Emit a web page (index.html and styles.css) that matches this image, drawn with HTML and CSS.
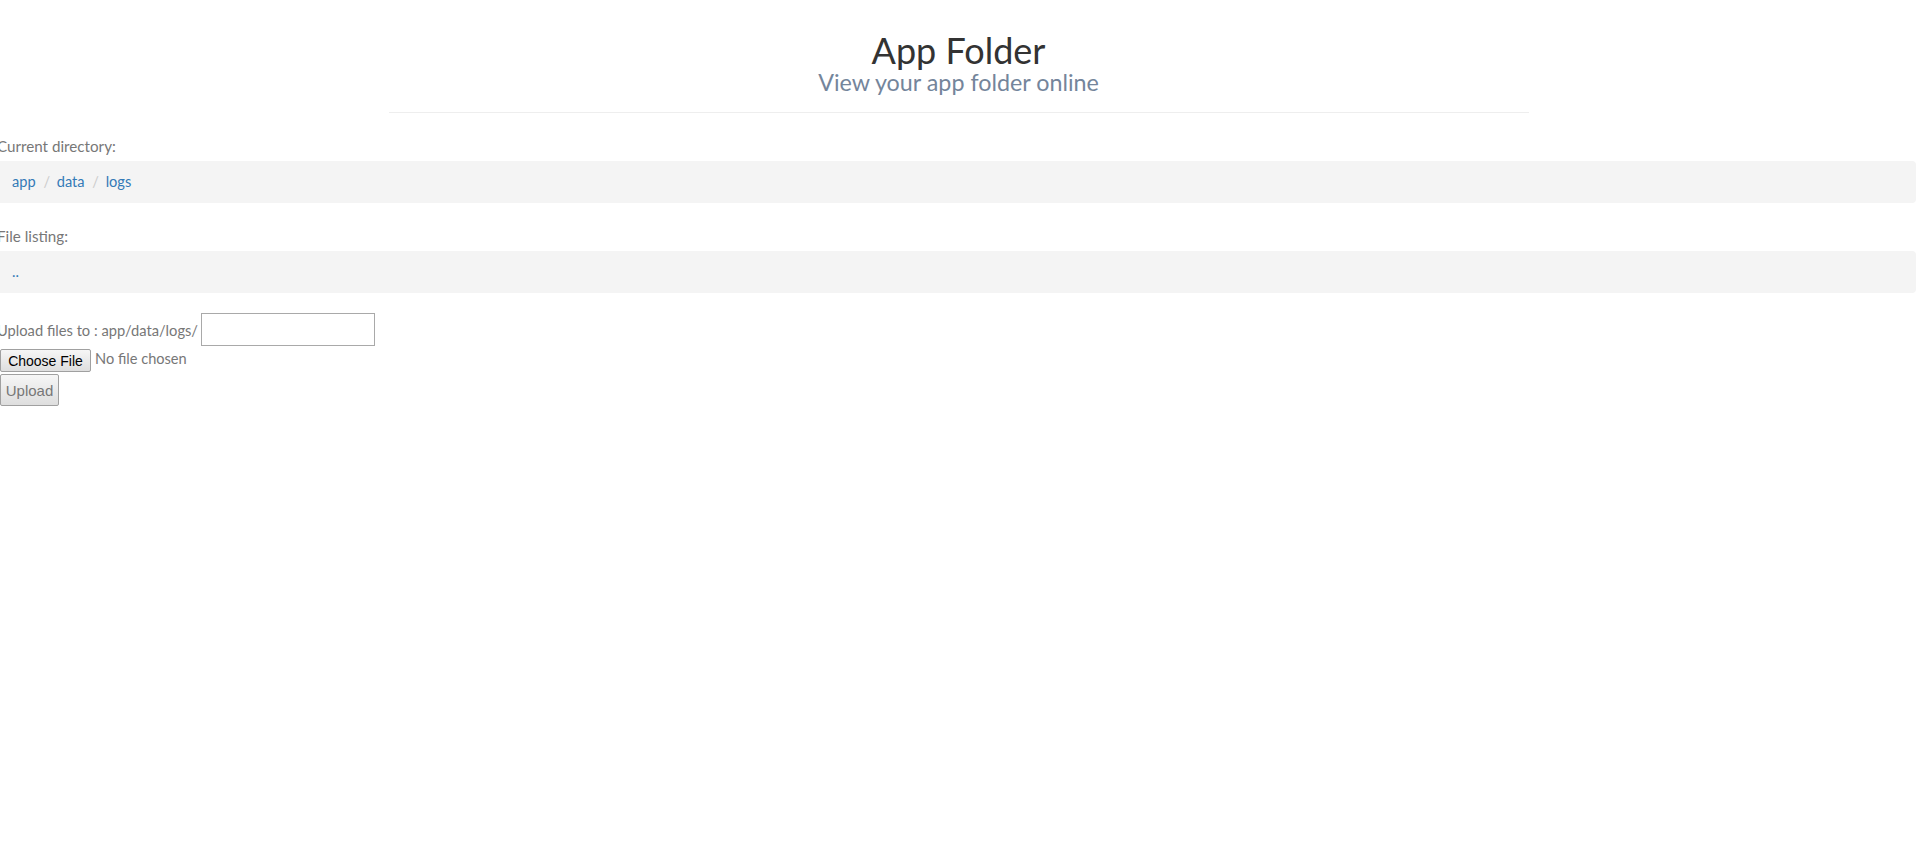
FILE: index.html
```html
<!DOCTYPE html>
<html>
<head>
<meta charset="utf-8">
<title>App Folder</title>
<link rel="stylesheet" href="styles.css">
</head>
<body>
<header class="page-header">
  <h1 class="title">App Folder</h1>
  <p class="subtitle">View your app folder online</p>
</header>
<main class="main">
  <section class="section">
    <label class="label">Current directory:</label>
    <ol class="crumbs">
      <li class="crumb"><a href="#">app</a></li>
      <li class="crumb"><a href="#">data</a></li>
      <li class="crumb"><a href="#">logs</a></li>
    </ol>
  </section>
  <section class="section">
    <label class="label">File listing:</label>
    <ul class="crumbs">
      <li class="crumb-plain"><a href="#">..</a></li>
    </ul>
  </section>
  <form class="upload">
    <div class="upload-row">
      <span class="upload-label">Upload files to : app/data/logs/</span>
      <input class="dir-input" type="text">
    </div>
    <div class="file-row">
      <button type="button" class="btn-choose">Choose File</button>
      <span class="file-status">No file chosen</span>
    </div>
    <div class="submit-row">
      <button type="button" class="btn-upload">Upload</button>
    </div>
  </form>
</main>
</body>
</html>
```
FILE: styles.css
```css
html, body {
  margin: 0;
  padding: 0;
  background: #fff;
}
body {
  font-family: Lato, "Open Sans", sans-serif;
  font-size: 14px;
  line-height: 20px;
  color: #777;
}
.page-header {
  width: 1140px;
  margin: 0 auto;
  padding-top: 31px;
  padding-bottom: 17px;
  border-bottom: 1px solid #eee;
  text-align: center;
}
.title {
  margin: 0;
  font-size: 36px;
  line-height: 38px;
  font-weight: 400;
  color: #333;
}
.subtitle {
  margin: 0;
  font-size: 23.3px;
  line-height: 26px;
  color: #74859b;
}
.main {
  margin-left: -3px;
  margin-right: 1px;
}
.section {
  padding-top: 23px;
}
.label {
  display: block;
  margin-bottom: 5px;
  font-size: 15.2px;
}
.crumbs {
  list-style: none;
  margin: 0;
  padding: 11px 15px;
  background: #f4f4f4;
  border-radius: 4px;
  font-size: 14.6px;
}
.crumb, .crumb-plain {
  display: inline-block;
}
.crumb + .crumb::before {
  content: "/\00a0";
  padding: 0 3px 0 4px;
  color: #ccc;
}
a {
  color: #337ab7;
  text-decoration: none;
}
.upload {
  padding-top: 20px;
}
.upload-row {
  display: flex;
  align-items: flex-end;
  gap: 3px;
}
.upload-label {
  padding-bottom: 6px;
  font-size: 14.7px;
}
.dir-input {
  box-sizing: border-box;
  width: 174px;
  height: 33px;
  margin: 0;
  border: 1px solid #a9a9a9;
  padding: 1px 3px;
  font: 14px "Liberation Sans", Arial, sans-serif;
}
.file-row {
  display: flex;
  align-items: center;
  gap: 4px;
  margin-top: 3px;
  margin-left: 3px;
}
.btn-choose {
  box-sizing: border-box;
  height: 23px;
  width: 91px;
  margin: 0;
  padding: 0 3px;
  border: 1px solid #a0a0a0;
  border-radius: 2px;
  background: linear-gradient(#f6f6f6, #dedede);
  font: 14px "Liberation Sans", Arial, sans-serif;
  color: #000;
}
.file-status {
  margin-top: -4px;
  font-size: 14.6px;
}
.submit-row {
  margin-top: 2px;
  margin-left: 3px;
}
.btn-upload {
  box-sizing: border-box;
  height: 32px;
  width: 59px;
  margin: 0;
  padding: 0 4px;
  border: 1px solid #a0a0a0;
  border-radius: 2px;
  background: linear-gradient(#f6f6f6, #dedede);
  font: 15px "Liberation Sans", Arial, sans-serif;
  color: #777;
}
```
